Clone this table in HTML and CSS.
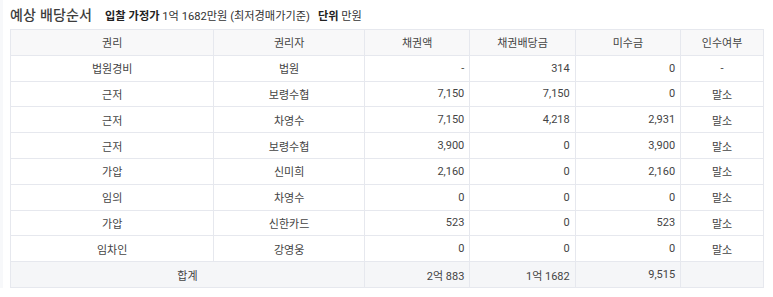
FILE: index.html
```html
<!DOCTYPE html>
<html lang="ko">
<head>
<meta charset="utf-8">
<link rel="stylesheet" href="styles.css">
</head>
<body>
<div class="wrap">
  <div class="head">
    <h2 class="title">예상 배당순서</h2>
    <span class="info"><b>입찰 가정가</b> 1억 1682만원 (최저경매가기준)</span>
    <span class="info"><b>단위</b> 만원</span>
  </div>
  <table class="dist">
    <colgroup>
      <col class="c1"><col class="c2"><col class="c3"><col class="c4"><col class="c5"><col class="c6">
    </colgroup>
    <thead>
      <tr><th>권리</th><th>권리자</th><th>채권액</th><th>채권배당금</th><th>미수금</th><th>인수여부</th></tr>
    </thead>
    <tbody>
      <tr><td>법원경비</td><td>법원</td><td class="num">-</td><td class="num">314</td><td class="num">0</td><td>-</td></tr>
      <tr><td>근저</td><td>보령수협</td><td class="num">7,150</td><td class="num">7,150</td><td class="num">0</td><td>말소</td></tr>
      <tr><td>근저</td><td>차영수</td><td class="num">7,150</td><td class="num">4,218</td><td class="num">2,931</td><td>말소</td></tr>
      <tr><td>근저</td><td>보령수협</td><td class="num">3,900</td><td class="num">0</td><td class="num">3,900</td><td>말소</td></tr>
      <tr><td>가압</td><td>신미희</td><td class="num">2,160</td><td class="num">0</td><td class="num">2,160</td><td>말소</td></tr>
      <tr><td>임의</td><td>차영수</td><td class="num">0</td><td class="num">0</td><td class="num">0</td><td>말소</td></tr>
      <tr><td>가압</td><td>신한카드</td><td class="num">523</td><td class="num">0</td><td class="num">523</td><td>말소</td></tr>
      <tr><td>임차인</td><td>강영웅</td><td class="num">0</td><td class="num">0</td><td class="num">0</td><td>말소</td></tr>
    </tbody>
    <tfoot>
      <tr><td colspan="2">합계</td><td class="num">2억 883</td><td class="num">1억 1682</td><td class="num">9,515</td><td></td></tr>
    </tfoot>
  </table>
</div>
</body>
</html>
```
FILE: styles.css
```css
html, body {
  margin: 0;
  padding: 0;
  background: #ffffff;
}
body {
  font-family: Roboto, "Noto Sans CJK KR", sans-serif;
  color: #444;
  border-left: 3px solid #f7f8fa;
}
.wrap {
  padding: 0 9px 0 7px;
}
.head {
  display: flex;
  align-items: baseline;
  gap: 8px;
  height: 29px;
  padding-top: 4px;
  box-sizing: border-box;
}
.title {
  margin: 0 5px 0 0;
  font-family: "Noto Sans CJK KR", sans-serif;
  font-size: 14px;
  font-weight: 500;
  color: #3d3d3d;
  letter-spacing: 0.1px;
}
.info {
  font-family: Roboto, "Noto Sans CJK KR", sans-serif;
  font-size: 11.2px;
  color: #333;
}
.info b {
  font-family: "Noto Sans CJK KR", sans-serif;
  font-weight: 700;
  color: #222;
}
.dist {
  width: 100%;
  border-collapse: collapse;
  table-layout: fixed;
  font-size: 11px;
  border: 1px solid #e4e6ec;
}
.c1 { width: 27%; }
.c2 { width: 20%; }
.c3 { width: 14%; }
.c4 { width: 14%; }
.c5 { width: 14%; }
.c6 { width: 11%; }
.dist th, .dist td {
  border: 1px solid #e6e8ee;
  height: 25.8px;
  padding: 0 5px;
  text-align: center;
  font-weight: 400;
  color: #444;
  box-sizing: border-box;
}
.dist thead th {
  background: #f8f8f9;
}
.dist td.num {
  text-align: right;
}
.dist tfoot td {
  background: #f5f6f8;
}
```
